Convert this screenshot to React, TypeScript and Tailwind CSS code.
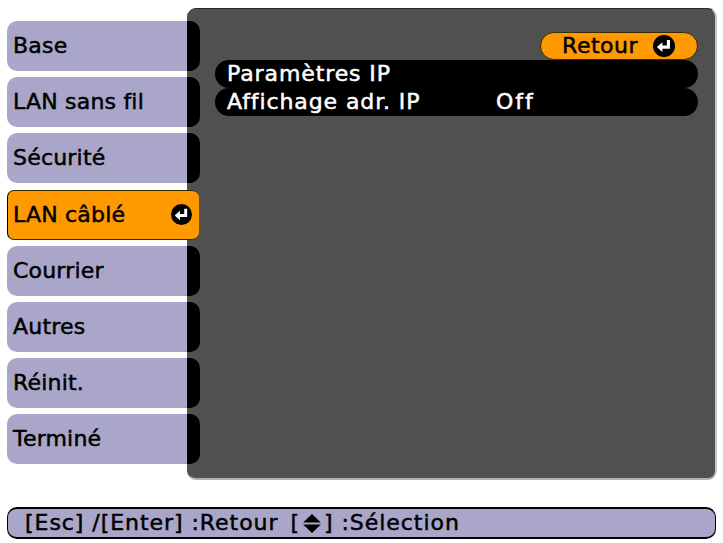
const tabs = ["Base", "LAN sans fil", "Sécurité", "LAN câblé", "Courrier", "Autres", "Réinit.", "Terminé"];
const ACTIVE = 3;

function EnterIcon({ size }: { size: number }) {
  return (
    <svg width={size} height={size} viewBox="0 0 20 20" className="shrink-0">
      <circle cx="10" cy="10" r="10" fill="#000" />
      <path d="M14 4.5v6.5H7" fill="none" stroke="#fff" strokeWidth="2.8" />
      <path d="M3.5 11l5-4.5v9z" fill="#fff" />
    </svg>
  );
}

function UpDownIcon() {
  return (
    <svg width="20" height="21" viewBox="0 0 18 19" className="shrink-0">
      <path d="M9 1l8 7.5H1z" fill="#000" />
      <path d="M9 18l8-7.5H1z" fill="#000" />
    </svg>
  );
}

function MenuRow({ label, value }: { label: string; value?: string }) {
  return (
    <div className="flex h-[28px] shrink-0 items-center rounded-full bg-black pb-[1px] pl-[12px] tracking-[0.9px] text-white">
      <span className="w-[269px] shrink-0">{label}</span>
      {value && <span className="tracking-[2px]">{value}</span>}
    </div>
  );
}

export default function App() {
  return (
    <div className="flex h-[543px] w-[723px] flex-col overflow-hidden bg-white pt-[8px] pl-[7px] font-['DejaVu_Sans',sans-serif] text-[22px] leading-none text-black [-webkit-text-stroke:0.5px]">
      <div className="flex h-[472px]">
        <div className="flex w-[180px] shrink-0 flex-col gap-[6.2px] pt-[13px] tracking-[0.2px]">
          {tabs.map((tab, i) =>
            i === ACTIVE ? (
              <div
                key={tab}
                className="relative z-10 flex h-[50px] w-[192px] shrink-0 items-center justify-between rounded-[7px] border-y border-l border-y-[#3a2a00] border-l-black bg-[#ff9900] pr-[7px] pl-[5px]"
              >
                {tab}
                <EnterIcon size={21} />
              </div>
            ) : (
              <div key={tab} className="flex h-[50px] shrink-0 items-center rounded-l-[10px] bg-[#a9a6c9] pl-[6px]">
                {tab}
              </div>
            ),
          )}
        </div>

        <div className="flex w-[530px] rounded-[9px] border-t border-r-2 border-b-2 border-t-[#2a2a2a] border-r-[#c8c8c8] border-b-[#b0b0b0] bg-[#505050]">
          <div className="flex w-[13px] shrink-0 flex-col gap-[6.2px] pt-[12px]">
            {tabs.map((tab, i) => (
              <div key={tab} className={i === ACTIVE ? "h-[50px] shrink-0" : "h-[50px] shrink-0 rounded-r-[10px] bg-black"} />
            ))}
          </div>
          <div className="flex min-w-0 flex-1 flex-col pt-[23px] pr-[17px] pl-[15px]">
            <div className="flex justify-end">
              <div className="flex h-[28px] w-[158px] items-center justify-end gap-[15px] rounded-full border border-[#3a2a00] bg-[#ff9900] pr-[22px] tracking-[0.5px]">
                Retour
                <EnterIcon size={22} />
              </div>
            </div>
            <MenuRow label="Paramètres IP" />
            <MenuRow label="Affichage adr. IP" value="Off" />
          </div>
        </div>
      </div>

      <div className="mt-[27px] flex h-[32px] w-[709px] items-center gap-[12px] rounded-[10px] border-y-2 border-x border-black bg-[#a9a6c9] pl-[17px] tracking-[0.95px]">
        <span>[Esc] /[Enter] :Retour</span>
        <span className="flex items-center gap-[2px]">
          [<UpDownIcon />] :Sélection
        </span>
      </div>
    </div>
  );
}
